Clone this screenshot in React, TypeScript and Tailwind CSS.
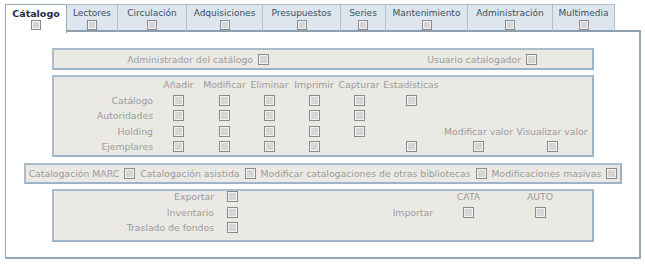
import React from 'react';

const tabs = [
  { label: 'Cátalogo', w: 'w-[62px]', active: true },
  { label: 'Lectores', w: 'w-[51px]' },
  { label: 'Circulación', w: 'w-[69px]' },
  { label: 'Adquisiciones', w: 'w-[76px]' },
  { label: 'Presupuestos', w: 'w-[78px]' },
  { label: 'Series', w: 'w-[45px]' },
  { label: 'Mantenimiento', w: 'w-[82px]' },
  { label: 'Administración', w: 'w-[85px]' },
  { label: 'Multimedia', w: 'w-[62px]' },
];

function Cb({ className = 'w-[11px] h-[11px]' }: { className?: string }) {
  return (
    <span
      className={`block shrink-0 border border-[#8a8a8a] bg-[#d6d6d6] shadow-[inset_0_0_0_1px_#f2f2f2] ${className}`}
    />
  );
}

// '' = empty cell, 'x' = checkbox, otherwise text
const permRows: string[][] = [
  ['', 'Añadir', 'Modificar', 'Eliminar', 'Imprimir', 'Capturar', 'Estadísticas', '', ''],
  ['Catálogo', 'x', 'x', 'x', 'x', 'x', 'x', '', ''],
  ['Autoridades', 'x', 'x', 'x', 'x', 'x', '', '', ''],
  ['Holding', 'x', 'x', 'x', 'x', 'x', '', 'Modificar valor', 'Visualizar valor'],
  ['Ejemplares', 'x', 'x', 'x', 'x', '', 'x', 'x', 'x'],
];

const otherRows: string[][] = [
  ['Exportar', 'x', '', 'CATA', 'AUTO'],
  ['Inventario', 'x', 'Importar', 'x', 'x'],
  ['Traslado de fondos', 'x', '', '', ''],
];

function Cell({ v, label }: { v: string; label?: boolean }) {
  if (v === 'x')
    return (
      <div className="flex items-center justify-center">
        <Cb />
      </div>
    );
  return (
    <div
      className={`flex items-center whitespace-nowrap ${label ? 'justify-end pr-[2px]' : 'justify-center'}`}
    >
      {v}
    </div>
  );
}

const box = 'border-2 border-[#adbccb] border-r-[#9db3c9] border-b-[#9db3c9] bg-[#ebe9e4] text-[#9b9b9b]';

export default function App() {
  return (
    <div className="w-[645px] h-[272px] bg-white pt-[4px] pl-[5px] font-['DejaVu_Sans',Verdana,sans-serif]">
      <div className="flex h-[28px] w-[636px]">
        {tabs.map((t) =>
          t.active ? (
            <div
              key={t.label}
              className={`${t.w} h-[29px] flex flex-col items-center bg-white border-l border-t border-r border-[#98a9b8] pt-[3px]`}
            >
              <span className="text-[9.5px] leading-[11px] font-bold text-[#1d2c3b]">{t.label}</span>
              <Cb className="mt-[1px] w-[10px] h-[10px]" />
            </div>
          ) : (
            <div
              key={t.label}
              className={`${t.w} h-[28px] flex flex-col items-center bg-[#dde6ee] border-t border-r border-[#b2c0cc] border-b-2 border-b-[#8d9fae] pt-[3px]`}
            >
              <span className="text-[9px] leading-[11px] text-[#3e4f60]">{t.label}</span>
              <Cb className="mt-[1px] w-[10px] h-[10px]" />
            </div>
          )
        )}
        <div className="flex-1 border-b-2 border-[#8d9fae]" />
      </div>
      <div className="w-[636px] h-[227px] border-l border-r-2 border-b-2 border-[#94a5b4] pt-[16px] text-[9.3px] leading-[11px]">
        <div className={`ml-[46px] w-[542px] h-[22px] flex items-center ${box}`}>
          <div className="w-[216px] flex items-center justify-end gap-[5px] pr-[1px]">
            <span>Administrador del catálogo</span>
            <Cb />
          </div>
          <div className="w-[267px] flex items-center justify-end gap-[5px]">
            <span>Usuario catalogador</span>
            <Cb />
          </div>
        </div>

        <div className={`ml-[46px] mt-[5px] w-[542px] h-[82px] ${box}`}>
          <div className="grid grid-cols-[101px_47px_45px_45px_44px_46px_58px_77px_70px] auto-rows-[15.5px]">
            {permRows.map((r, i) =>
              r.map((v, j) => <Cell key={`${i}-${j}`} v={v} label={j === 0} />)
            )}
          </div>
        </div>

        <div className={`ml-[18px] mt-[6px] w-[598px] h-[21px] flex items-center justify-center gap-[5px] ${box}`}>
          <span>Catalogación MARC</span>
          <Cb />
          <span>Catalogación asistida</span>
          <Cb />
          <span>Modificar catalogaciones de otras bibliotecas</span>
          <Cb />
          <span>Modificaciones masivas</span>
          <Cb />
        </div>

        <div className={`ml-[46px] mt-[5px] w-[542px] h-[53px] ${box}`}>
          <div className="-mt-[2px] grid grid-cols-[162px_32px_187px_67px_76px] auto-rows-[15.5px]">
            {otherRows.map((r, i) =>
              r.map((v, j) => <Cell key={`${i}-${j}`} v={v} label={j === 0 || j === 2} />)
            )}
          </div>
        </div>
      </div>
    </div>
  );
}
